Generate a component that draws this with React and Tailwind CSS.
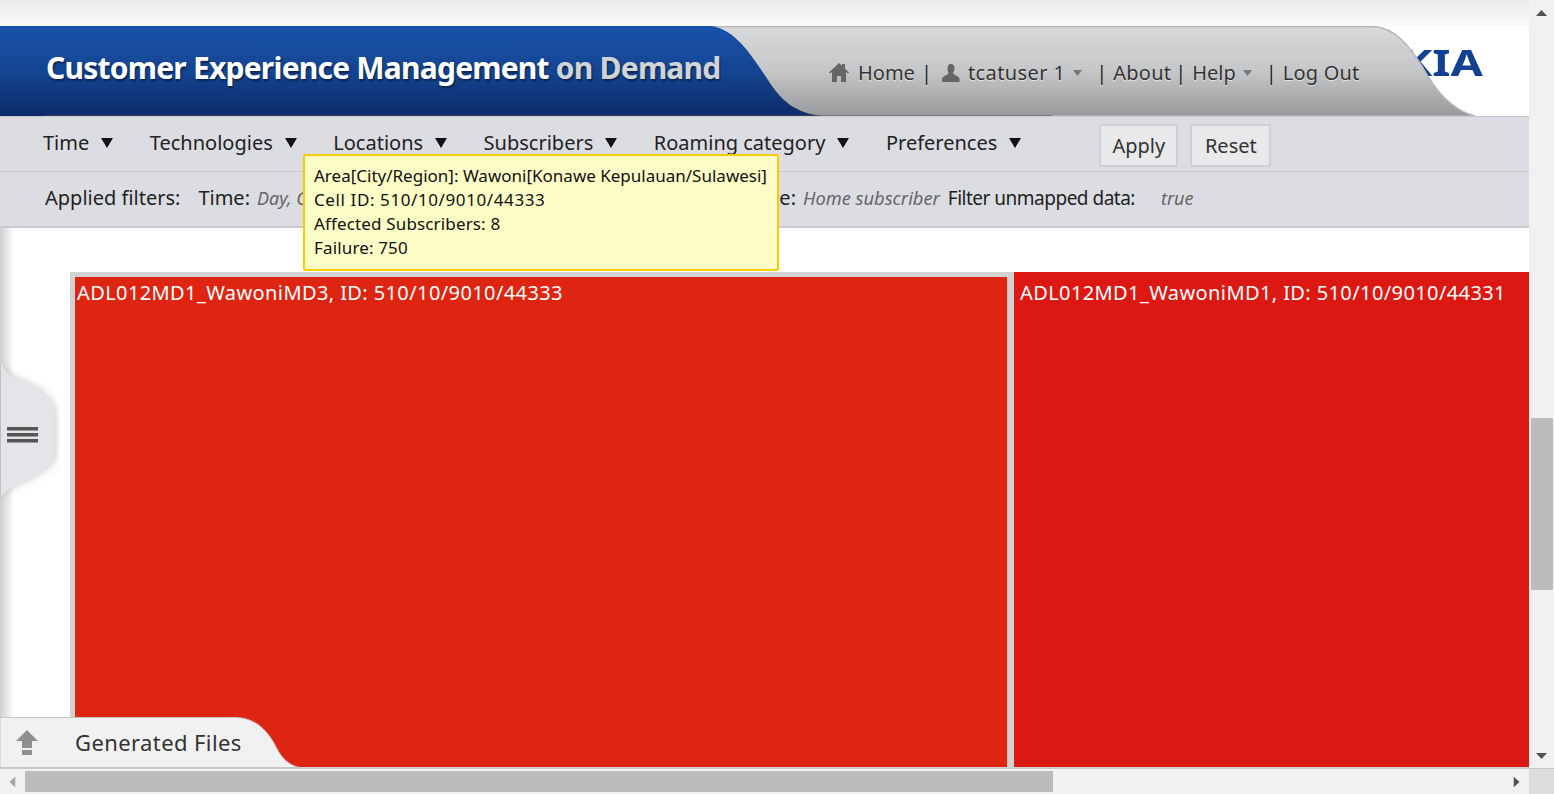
import React from "react";

const MENUS = ["Time", "Technologies", "Locations", "Subscribers", "Roaming category", "Preferences"];
const font = { fontFamily: '"Noto Sans", sans-serif' };

function Caret({ className }) {
  return (
    <svg viewBox="0 0 12 10" preserveAspectRatio="none" className={className} fill="currentColor">
      <path d="M0 0h12L6 10z" />
    </svg>
  );
}

function HeaderShapes() {
  return (
    <svg className="absolute inset-0 h-[90px] w-[1529px]" viewBox="0 26 1529 90">
      <defs>
        <linearGradient id="blue" x1="0" y1="0" x2="0" y2="1">
          <stop offset="0" stopColor="#1952ab" />
          <stop offset="0.5" stopColor="#144592" />
          <stop offset="1" stopColor="#0c2b69" />
        </linearGradient>
        <linearGradient id="grey" x1="0" y1="0" x2="0" y2="1">
          <stop offset="0" stopColor="#d8d9db" />
          <stop offset="0.5" stopColor="#c5c6c8" />
          <stop offset="1" stopColor="#97999b" />
        </linearGradient>
      </defs>
      <path d="M700 26.5H1372C1394 27 1408 44 1422 66C1436 92 1452 110 1475 116H700Z" fill="url(#grey)" stroke="#b4b5b7" strokeWidth="1.5" />
      <path d="M0 26H712C736 30 752 56 768 80C782 102 796 113 822 116H0Z" fill="url(#blue)" />
      <path d="M45 115.5H1052" stroke="#555" strokeOpacity="0.6" strokeWidth="1" />
    </svg>
  );
}

function Sep() {
  return <span className="text-[#222]">|</span>;
}

function UserNav() {
  return (
    <div className="absolute left-[829px] top-[33px] flex h-[28px] items-center text-[20px] text-[#333] [text-shadow:0_1px_1px_#e8e8e8]">
      <svg viewBox="0 0 20 20" className="h-5 w-5 text-[#666]" fill="currentColor">
        <path d="M10 0 0 9.500l1 1L3 9v10h5v-6h4v6h5V9l2 1.500 1-1L16 5.500V1h-3v1.700z" />
      </svg>
      <span className="ml-[9px]">Home</span>
      <span className="ml-[6px]"><Sep /></span>
      <svg viewBox="0 0 18 18" className="ml-[10px] h-[18px] w-[18px] text-[#666]" fill="currentColor">
        <path d="M9 0c2.500 0 3.500 2 3.500 4.500 0 2-1 3.500-1.500 4.500 0 2 6.500 3 6.500 6v3H0v-3c0-3 6.500-4 6.500-6C6 8 5.500 6.500 5.500 4.500 5.500 2 6.500 0 9 0z" />
      </svg>
      <span className="ml-[8px] tracking-[0.4px]">tcatuser 1</span>
      <Caret className="ml-[8px] h-[6px] w-[9px] text-[#777]" />
      <span className="ml-[14px]"><Sep /></span>
      <span className="ml-[6px] tracking-[0.2px]">About</span>
      <span className="ml-[4px]"><Sep /></span>
      <span className="ml-[6px]">Help</span>
      <Caret className="ml-[7px] h-[6px] w-[9px] text-[#777]" />
      <span className="ml-[14px]"><Sep /></span>
      <span className="ml-[6px] tracking-[0.2px]">Log Out</span>
    </div>
  );
}

function Tooltip() {
  return (
    <div className="absolute left-[303px] top-[154px] z-20 h-[117px] w-[476px] rounded-[3px] border-2 border-[#f6cd00] bg-[#fcfcc6] px-[9px] py-[8px] text-[17px] leading-[24px] text-[#111]">
      <div className="whitespace-nowrap">Area[City/Region]: Wawoni[Konawe Kepulauan/Sulawesi]</div>
      <div className="tracking-[0.6px]">Cell ID: 510/10/9010/44333</div>
      <div className="tracking-[0.15px]">Affected Subscribers: 8</div>
      <div className="tracking-[0.15px]">Failure: 750</div>
    </div>
  );
}

function SideHandle() {
  return (
    <div className="absolute left-0 top-[130px] z-10 h-[160px] w-[60px]">
      <svg viewBox="0 0 60 160" className="h-full w-full">
        <defs>
          <filter id="handleShadow" x="-30%" y="-20%" width="160%" height="140%">
            <feGaussianBlur stdDeviation="4" />
          </filter>
        </defs>
        <path d="M0 5C6 16 12 19 20 22C30 26 38 30 43 35C50 40 55 46 55 56V95C55 104 50 108 43 112C36 118 28 121 20 125C10 130 4 134 0 140Z" fill="#888" opacity="0.5" filter="url(#handleShadow)" />
        <path d="M1 5C6 16 12 19 20 22C30 26 38 30 43 35C50 40 54 46 54 56V95C54 104 50 108 43 112C36 118 28 121 20 125C10 130 4 134 1 140Z" fill="#e4e4e9" />
        <rect x="7" y="69" width="31" height="3.500" fill="#555" />
        <rect x="7" y="75" width="31" height="3.500" fill="#555" />
        <rect x="7" y="81" width="31" height="3.500" fill="#555" />
      </svg>
    </div>
  );
}

function FilesTab() {
  return (
    <div className="absolute bottom-0 left-0 z-10 flex h-[51px] w-[300px] items-center">
      <svg viewBox="0 0 300 51" className="absolute inset-0 h-full w-full">
        <path d="M0 0.500H236C256 1 268 14 276 30C282 42 290 49 300 50.500H0Z" fill="#f1f1f1" stroke="#c4c4c4" strokeWidth="1" />
      </svg>
      <svg viewBox="0 0 22 26" className="relative ml-[16px] h-[26px] w-[22px] text-[#8f8f8f]" fill="currentColor">
        <path d="M11 0 22 11h-6v7H6v-7H0zM6 20h10v5H6z" />
      </svg>
      <span className="relative ml-[37px] text-[22px] tracking-[0.4px] text-[#333]">Generated Files</span>
    </div>
  );
}

export default function App() {
  return (
    <div className="flex h-screen w-full flex-col overflow-hidden bg-white" style={font}>
      <div className="flex min-h-0 flex-1">
        <main className="relative w-[1529px] overflow-hidden">
          <div className="h-[26px] bg-gradient-to-b from-[#e9eaec] to-[#fbfbfb]" />

          <header className="relative h-[90px]">
            <span className="absolute right-[46px] top-[12px] origin-right scale-x-[1.3] text-[36px] font-bold leading-[50px] text-[#124191]">KIA</span>
            <HeaderShapes />
            <h1 className="absolute left-[46px] top-[19px] text-[30px] font-bold leading-[46px] tracking-[-0.78px] text-white [text-shadow:1px_2px_2px_#0a2450]">
              Customer Experience Management <span className="text-[#d2d3d5]">on Demand</span>
            </h1>
            <UserNav />
          </header>

          <nav className="flex h-[56px] items-start border-y border-[#c9cace] bg-[#dcdde2] pl-[43px] pt-[7px] text-[20px] text-[#222]">
            <div className="flex items-center gap-[36.5px] pt-[4px]">
              {MENUS.map((m) => (
                <div key={m} className="flex items-center gap-[12px]">
                  <span>{m}</span>
                  <Caret className="h-[10px] w-[12px] text-[#111]" />
                </div>
              ))}
            </div>
            <button className="ml-[78px] h-[43px] w-[79px] rounded-[2px] border-2 border-[#cfd0d4] bg-[#e9e8ea] text-[#333]">Apply</button>
            <button className="ml-[12px] h-[43px] w-[81px] rounded-[2px] border-2 border-[#cfd0d4] bg-[#e9e8ea] text-[#333]">Reset</button>
          </nav>

          <div className="flex h-[56px] items-center border-b-2 border-[#c9cace] bg-[#dcdde2] pb-[2px] pl-[45px] text-[20px] text-[#222]">
            <span>Applied filters:</span>
            <span className="ml-[18px]">Time:</span>
            <span className="ml-[7px] w-[300px] truncate text-[18px] italic text-[#666]">Day, Cumulative</span>
            <span className="w-[239px] text-right">Subscriber type:</span>
            <span className="ml-[7px] text-[18.3px] italic text-[#666]">Home subscriber</span>
            <span className="ml-[8px] text-[19px] tracking-[-0.5px]">Filter unmapped data:</span>
            <span className="ml-[26px] text-[18px] italic text-[#666]">true</span>
          </div>

          <section className="relative h-[540px] pt-[44px] pl-[70px]">
            <div className="absolute bottom-0 left-0 top-0 w-[14px] bg-gradient-to-r from-[#cfcfcf] to-white" />
            <div className="flex h-[496px] bg-[#d2d2d2]">
              <div className="ml-[5px] mt-[5px] h-[490px] w-[933px] border-r border-[#f0c0b0] bg-[#dd2511] pl-[2px] pt-[2px] text-[20px] leading-[27px] tracking-[0.4px] text-white">
                ADL012MD1_WawoniMD3, ID: 510/10/9010/44333
              </div>
              <div className="ml-[6px] h-[495px] flex-1 overflow-hidden whitespace-nowrap bg-[#dc1813] pl-[6px] pt-[7px] text-[20px] leading-[27px] tracking-[0.4px] text-white">
                ADL012MD1_WawoniMD1, ID: 510/10/9010/44331
              </div>
            </div>
            <SideHandle />
            <FilesTab />
          </section>

          <Tooltip />
        </main>

        <aside className="flex w-[25px] flex-col items-center bg-[#f1f1f1] pt-[10px] pb-[9px]">
          <Caret className="h-[6px] w-[11px] rotate-180 text-[#505050]" />
          <div className="mt-[402px] h-[172px] w-[22px] bg-[#bcbcbc]" />
          <Caret className="mt-auto h-[6px] w-[11px] text-[#505050]" />
        </aside>
      </div>

      <div className="flex h-[26px] border-t border-[#c8c8c8] bg-[#f1f1f1]">
        <div className="relative flex w-[1529px] items-center">
          <Caret className="ml-[7px] h-[6px] w-[11px] rotate-90 text-[#a3a3a3]" />
          <div className="ml-[7px] h-[21px] w-[1028px] bg-[#bcbcbc]" />
          <Caret className="ml-auto mr-[7px] h-[6px] w-[11px] -rotate-90 text-[#505050]" />
        </div>
        <div className="flex-1 bg-[#dcdcdc]" />
      </div>
    </div>
  );
}
